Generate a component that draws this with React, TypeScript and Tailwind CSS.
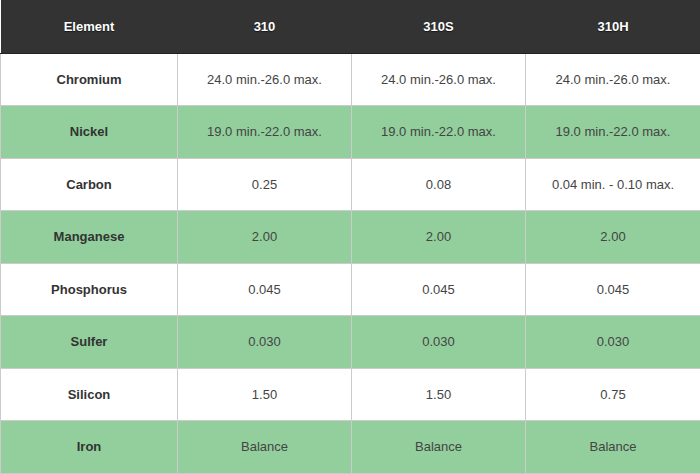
const rows: [string, string, string, string][] = [
  ["Chromium", "24.0 min.-26.0 max.", "24.0 min.-26.0 max.", "24.0 min.-26.0 max."],
  ["Nickel", "19.0 min.-22.0 max.", "19.0 min.-22.0 max.", "19.0 min.-22.0 max."],
  ["Carbon", "0.25", "0.08", "0.04 min. - 0.10 max."],
  ["Manganese", "2.00", "2.00", "2.00"],
  ["Phosphorus", "0.045", "0.045", "0.045"],
  ["Sulfer", "0.030", "0.030", "0.030"],
  ["Silicon", "1.50", "1.50", "0.75"],
  ["Iron", "Balance", "Balance", "Balance"],
];

export default function App() {
  return (
    <div className="w-[700px] h-[474px] bg-white font-['Liberation_Sans',Arial,sans-serif] text-[13px]">
      <table className="w-[700px] table-fixed border-collapse">
        <colgroup>
          <col className="w-[177px]" />
          <col className="w-[174px]" />
          <col className="w-[174px]" />
          <col className="w-[175px]" />
        </colgroup>
        <thead>
          <tr className="h-[53px] bg-[#333333] text-white font-bold [text-shadow:0_1px_1px_rgba(0,0,0,0.6)]">
            {["Element", "310", "310S", "310H"].map((h) => (
              <th key={h} className="border-b border-[#222] text-center font-bold">
                {h}
              </th>
            ))}
          </tr>
        </thead>
        <tbody>
          {rows.map((r, i) => (
            <tr
              key={r[0]}
              className={`h-[52.5px] ${i % 2 === 1 ? "bg-[#92cf9c]" : "bg-white"}`}
            >
              <td className="border border-[#cccccc] text-center font-bold text-[#333333]">{r[0]}</td>
              {r.slice(1).map((v, j) => (
                <td key={j} className="border border-[#cccccc] text-center text-[#444444]">
                  {v}
                </td>
              ))}
            </tr>
          ))}
        </tbody>
      </table>
    </div>
  );
}
